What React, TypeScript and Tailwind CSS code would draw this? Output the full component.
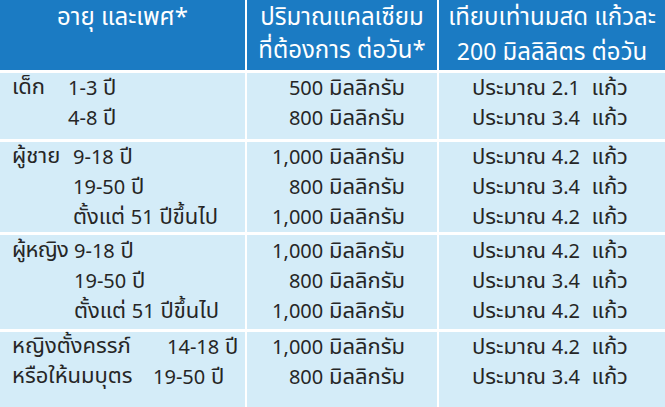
import React from "react";

type Row = { age: React.ReactNode; mg: string; cups: string };
type Group = { label: string; labelW: string; rows: Row[]; pt: string };

const N = ({ children, big }: { children: React.ReactNode; big?: boolean }) => (
  <span
    className={big ? "text-[23px]" : "text-[20px]"}
    style={{ fontFamily: '"Noto Sans", "Liberation Sans", sans-serif' }}
  >
    {children}
  </span>
);

const age = (a: string) => (
  <>
    <N>{a}</N> ปี
  </>
);

const groups: Group[] = [
  {
    label: "เด็ก",
    labelW: "w-[56px]",
    pt: "pt-[0px]",
    rows: [
      { age: age("1-3"), mg: "500", cups: "2.1" },
      { age: age("4-8"), mg: "800", cups: "3.4" },
    ],
  },
  {
    label: "ผู้ชาย",
    labelW: "w-[61px]",
    pt: "pt-[0px]",
    rows: [
      { age: age("9-18"), mg: "1,000", cups: "4.2" },
      { age: age("19-50"), mg: "800", cups: "3.4" },
      { age: <>ตั้งแต่ <N>51</N> ปีขึ้นไป</>, mg: "1,000", cups: "4.2" },
    ],
  },
  {
    label: "ผู้หญิง",
    labelW: "w-[62px] tracking-[-0.7px]",
    pt: "pt-[1px]",
    rows: [
      { age: age("9-18"), mg: "1,000", cups: "4.2" },
      { age: age("19-50"), mg: "800", cups: "3.4" },
      { age: <>ตั้งแต่ <N>51</N> ปีขึ้นไป</>, mg: "1,000", cups: "4.2" },
    ],
  },
];

const font = { fontFamily: '"Noto Sans Thai", "Noto Sans", "Liberation Sans", sans-serif' };

const cell = "bg-[#d4ecf8] text-[22px] leading-[29px]";
const head = "bg-[#1b7bc3] text-white text-[24px] leading-[33px] text-center pt-[2px]";

export default function App() {
  return (
    <div
      className="w-[665px] h-[407px] overflow-hidden bg-white text-[#262626]"
      style={font}
    >
      <div className="grid grid-cols-[245px_190px_1fr] gap-x-[2px] gap-y-[3px] h-full grid-rows-[70px_66px_90px_94px_1fr]">
        {/* Header */}
        <div className={head}>อายุ และเพศ*</div>
        <div className={head}>
          <div>ปริมาณแคลเซียม</div>
          <div>ที่ต้องการ ต่อวัน*</div>
        </div>
        <div className={head}>
          <div>เทียบเท่านมสด แก้วละ</div>
          <div>
            <N big>200</N> มิลลิลิตร ต่อวัน
          </div>
        </div>

        {groups.map((g) => (
          <React.Fragment key={g.label}>
            <div className={`${cell} flex pl-3 ${g.pt}`}>
              <div className={`${g.labelW} shrink-0`}>{g.label}</div>
              <div>
                {g.rows.map((r, i) => (
                  <div key={i} className="whitespace-pre">{r.age}</div>
                ))}
              </div>
            </div>
            <div className={`${cell} text-right pr-[32px] ${g.pt}`}>
              {g.rows.map((r, i) => (
                <div key={i} className="whitespace-pre">
                  <N>{r.mg}</N> มิลลิกรัม
                </div>
              ))}
            </div>
            <div className={`${cell} text-center pr-[4px] ${g.pt}`}>
              {g.rows.map((r, i) => (
                <div key={i} className="whitespace-pre">
                  ประมาณ <N>{r.cups}</N>  แก้ว
                </div>
              ))}
            </div>
          </React.Fragment>
        ))}

        {/* Last group */}
        <div className={`${cell} pl-3`}>
          <div className="flex">
            <div className="w-[155px] shrink-0">หญิงตั้งครรภ์</div>
            <div className="whitespace-pre">{age("14-18")}</div>
          </div>
          <div className="flex">
            <div className="w-[141px] shrink-0">หรือให้นมบุตร</div>
            <div className="whitespace-pre">{age("19-50")}</div>
          </div>
        </div>
        <div className={`${cell} text-right pr-[32px]`}>
          <div className="whitespace-pre">
            <N>1,000</N> มิลลิกรัม
          </div>
          <div className="whitespace-pre">
            <N>800</N> มิลลิกรัม
          </div>
        </div>
        <div className={`${cell} text-center pr-[4px]`}>
          <div className="whitespace-pre">
            ประมาณ <N>4.2</N>  แก้ว
          </div>
          <div className="whitespace-pre">
            ประมาณ <N>3.4</N>  แก้ว
          </div>
        </div>
      </div>
    </div>
  );
}
